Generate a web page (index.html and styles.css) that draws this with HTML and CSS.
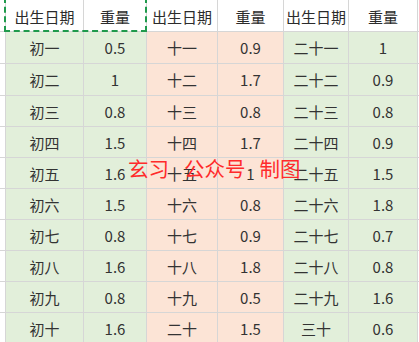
FILE: index.html
```html
<!DOCTYPE html>
<html lang="zh">
<head>
<meta charset="utf-8">
<link rel="stylesheet" href="styles.css">
</head>
<body>
<div class="sheet">
  <div class="grid">
    <div class="c hd"></div><div class="c hd">出生日期</div><div class="c hd">重量</div><div class="c hd">出生日期</div><div class="c hd">重量</div><div class="c hd">出生日期</div><div class="c hd">重量</div><div class="c hd"></div>

    <div class="c"></div><div class="c g">初一</div><div class="c g">0.5</div><div class="c p">十一</div><div class="c p">0.9</div><div class="c g">二十一</div><div class="c g">1</div><div class="c"></div>
    <div class="c"></div><div class="c g">初二</div><div class="c g">1</div><div class="c p">十二</div><div class="c p">1.7</div><div class="c g">二十二</div><div class="c g">0.9</div><div class="c"></div>
    <div class="c"></div><div class="c g">初三</div><div class="c g">0.8</div><div class="c p">十三</div><div class="c p">0.8</div><div class="c g">二十三</div><div class="c g">0.8</div><div class="c"></div>
    <div class="c"></div><div class="c g">初四</div><div class="c g">1.5</div><div class="c p">十四</div><div class="c p">1.7</div><div class="c g">二十四</div><div class="c g">0.9</div><div class="c"></div>
    <div class="c"></div><div class="c g">初五</div><div class="c g">1.6</div><div class="c p">十五</div><div class="c p">1</div><div class="c g">二十五</div><div class="c g">1.5</div><div class="c"></div>
    <div class="c"></div><div class="c g">初六</div><div class="c g">1.5</div><div class="c p">十六</div><div class="c p">0.8</div><div class="c g">二十六</div><div class="c g">1.8</div><div class="c"></div>
    <div class="c"></div><div class="c g">初七</div><div class="c g">0.8</div><div class="c p">十七</div><div class="c p">0.9</div><div class="c g">二十七</div><div class="c g">0.7</div><div class="c"></div>
    <div class="c"></div><div class="c g">初八</div><div class="c g">1.6</div><div class="c p">十八</div><div class="c p">1.8</div><div class="c g">二十八</div><div class="c g">0.8</div><div class="c"></div>
    <div class="c"></div><div class="c g">初九</div><div class="c g">0.8</div><div class="c p">十九</div><div class="c p">0.5</div><div class="c g">二十九</div><div class="c g">1.6</div><div class="c"></div>
    <div class="c"></div><div class="c g">初十</div><div class="c g">1.6</div><div class="c p">二十</div><div class="c p">1.5</div><div class="c g">三十</div><div class="c g">0.6</div><div class="c"></div>
  </div>
  <div class="marquee"></div>
  <div class="watermark"><span>玄习</span><span class="w2">公众号</span><span class="w3">制图</span></div>
</div>
</body>
</html>
```

FILE: styles.css
```css
html, body {
  margin: 0;
  padding: 0;
  background: #ffffff;
}
.sheet {
  position: relative;
  width: 419px;
  height: 342px;
  overflow: hidden;
  font-family: "Noto Sans CJK SC", "Noto Sans", sans-serif;
}
.grid {
  display: grid;
  grid-template-columns: 5px 77px 62px 70px 65px 64px 68px 1px;
  grid-template-rows: 31px 31px 31px repeat(8, 30px);
  gap: 1px;
  background: #d6d6d6;
}
.c {
  background: #ffffff;
  display: flex;
  align-items: center;
  justify-content: center;
  font-size: 15px;
  color: #333333;
  white-space: nowrap;
  overflow: hidden;
}
.hd {
  color: #2b2b2b;
  padding-top: 1px;
}
.g {
  background: #e2efda;
}
.p {
  background: #fce4d6;
}
.marquee {
  position: absolute;
  left: 4px;
  top: -3px;
  width: 139px;
  height: 31px;
  border: 2px dashed #1f9a4c;
}
.watermark {
  position: absolute;
  left: 128px;
  top: 154px;
  display: flex;
  font-size: 20.5px;
  line-height: 28px;
  color: #ff2b2b;
}
.w2 {
  margin-left: 15px;
}
.w3 {
  margin-left: 14px;
}
```
